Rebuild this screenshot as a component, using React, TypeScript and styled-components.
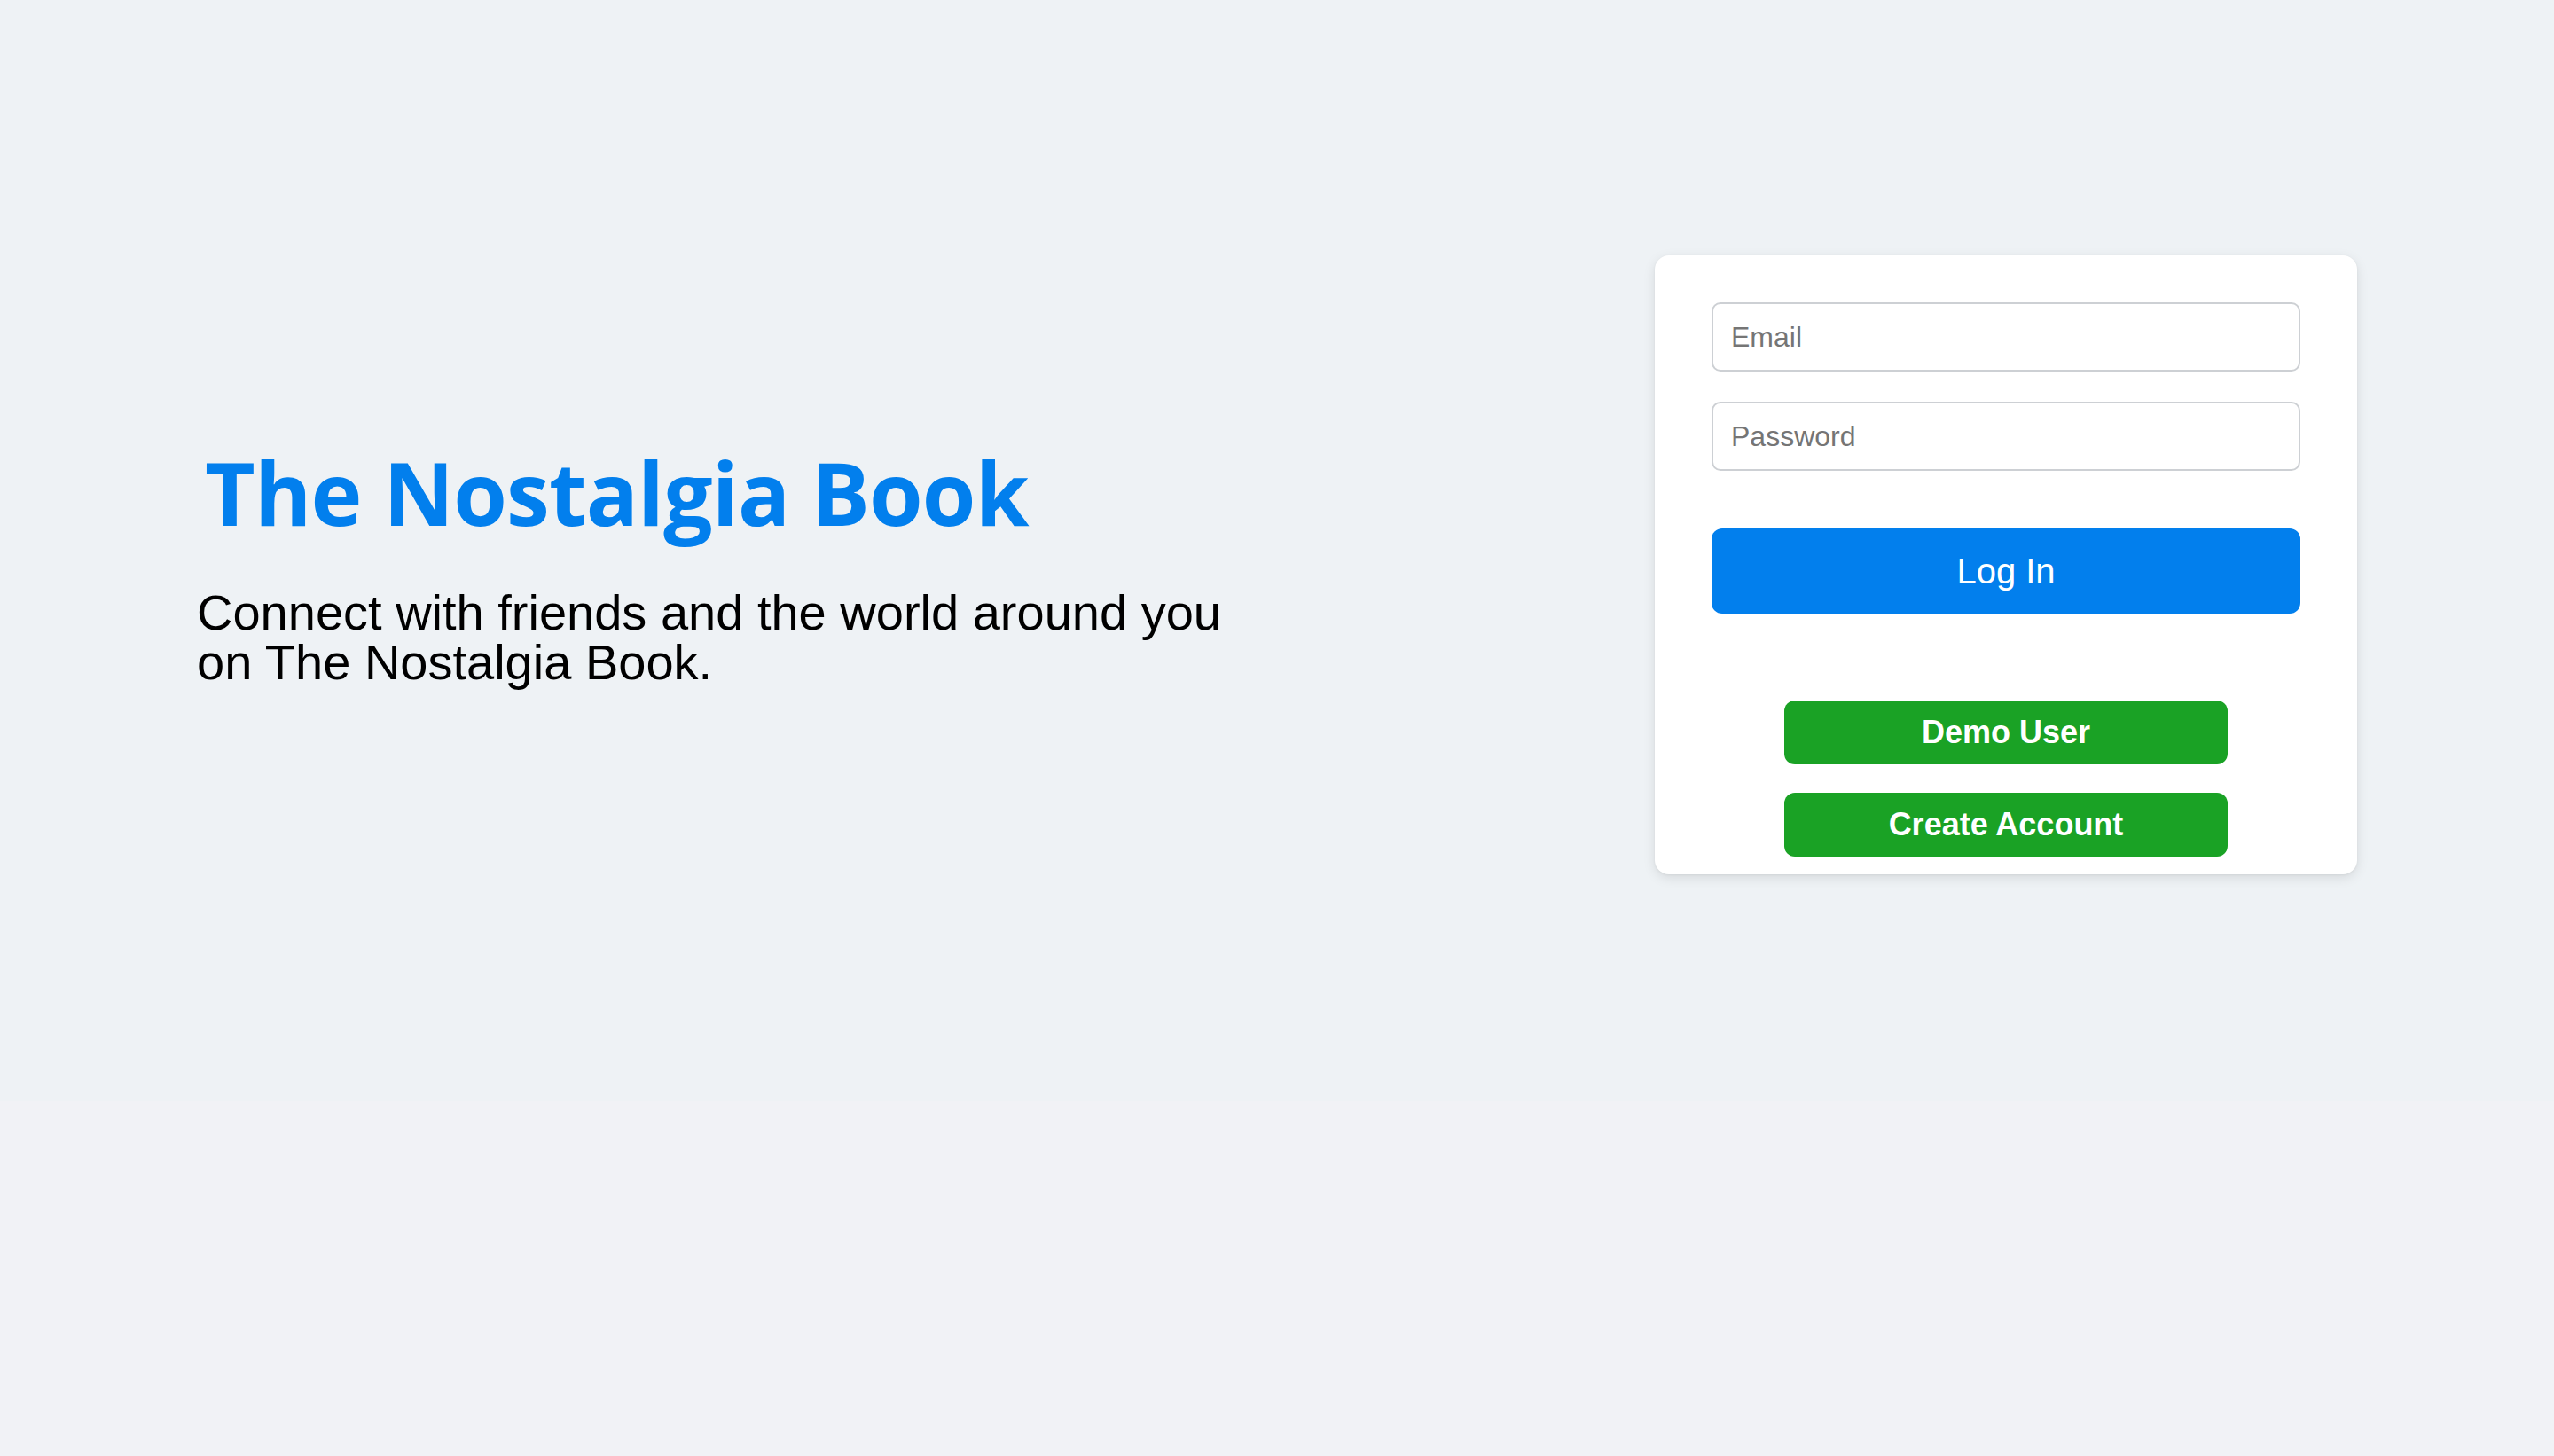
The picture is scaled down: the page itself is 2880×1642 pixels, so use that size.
import React from "react";
import styled, { createGlobalStyle } from "styled-components";

const GlobalStyle = createGlobalStyle`
  html, body {
    margin: 0;
    padding: 0;
    background: #f1f2f6;
  }
  body {
    font-family: "Liberation Sans", Arial, sans-serif;
  }
  * { box-sizing: border-box; }
`;

const Page = styled.div`
  width: 2880px;
  min-height: 1642px;
  background: #f1f2f6;
`;

const Hero = styled.main`
  height: 1242px;
  background: #eef2f5;
  display: flex;
  align-items: center;
  justify-content: space-between;
  padding: 32px 222px 0 222px;
`;

const Intro = styled.section`
  display: flex;
  flex-direction: column;
  width: 1200px;
  margin-top: -2px;
`;

const Title = styled.h1`
  margin: 0 0 48px 9px;
  font-family: "Open Sans", "Noto Sans", sans-serif;
  font-weight: 700;
  font-size: 98px;
  line-height: 1.2;
  letter-spacing: -0.8px;
  color: #027fed;
`;

const Tagline = styled.p`
  margin: 0;
  font-family: "Liberation Sans", Arial, sans-serif;
  font-size: 56px;
  line-height: 56px;
  color: #000;
  width: 1180px;
`;

const Card = styled.form`
  width: 792px;
  background: #ffffff;
  border-radius: 16px;
  box-shadow: 0 4px 14px rgba(0, 0, 0, 0.1), 0 1px 3px rgba(0, 0, 0, 0.05);
  padding: 53px 64px 20px 64px;
  display: flex;
  flex-direction: column;
  align-items: center;
`;

const Field = styled.input<{ $gap: number }>`
  width: 100%;
  height: 78px;
  border: 2px solid #cdd0d4;
  border-radius: 10px;
  padding: 0 20px;
  font-family: "Liberation Sans", Arial, sans-serif;
  font-size: 32px;
  color: #1c1e21;
  background: #fff;
  outline: none;
  margin-bottom: ${(p) => p.$gap}px;

  &::placeholder {
    color: #757575;
  }
`;

const LoginButton = styled.button`
  width: 100%;
  height: 96px;
  border: none;
  border-radius: 12px;
  background: #027fed;
  color: #fff;
  font-family: "Liberation Sans", Arial, sans-serif;
  font-size: 40px;
  font-weight: 400;
  margin-bottom: 98px;
  cursor: pointer;
`;

const ActionButton = styled.button<{ $gap: number }>`
  width: 500px;
  height: 72px;
  border: none;
  border-radius: 12px;
  background: #1aa225;
  color: #fff;
  font-family: "Liberation Sans", Arial, sans-serif;
  font-size: 36px;
  font-weight: 700;
  margin-bottom: ${(p) => p.$gap}px;
  cursor: pointer;
`;

export default function App() {
  return (
    <Page>
      <GlobalStyle />
      <Hero>
        <Intro>
          <Title>The Nostalgia Book</Title>
          <Tagline>
            Connect with friends and the world around you on The Nostalgia Book.
          </Tagline>
        </Intro>
        <Card onSubmit={(e) => e.preventDefault()}>
          <Field type="email" placeholder="Email" $gap={34} />
          <Field type="password" placeholder="Password" $gap={65} />
          <LoginButton type="submit">Log In</LoginButton>
          <ActionButton type="button" $gap={32}>Demo User</ActionButton>
          <ActionButton type="button" $gap={0}>Create Account</ActionButton>
        </Card>
      </Hero>
    </Page>
  );
}
